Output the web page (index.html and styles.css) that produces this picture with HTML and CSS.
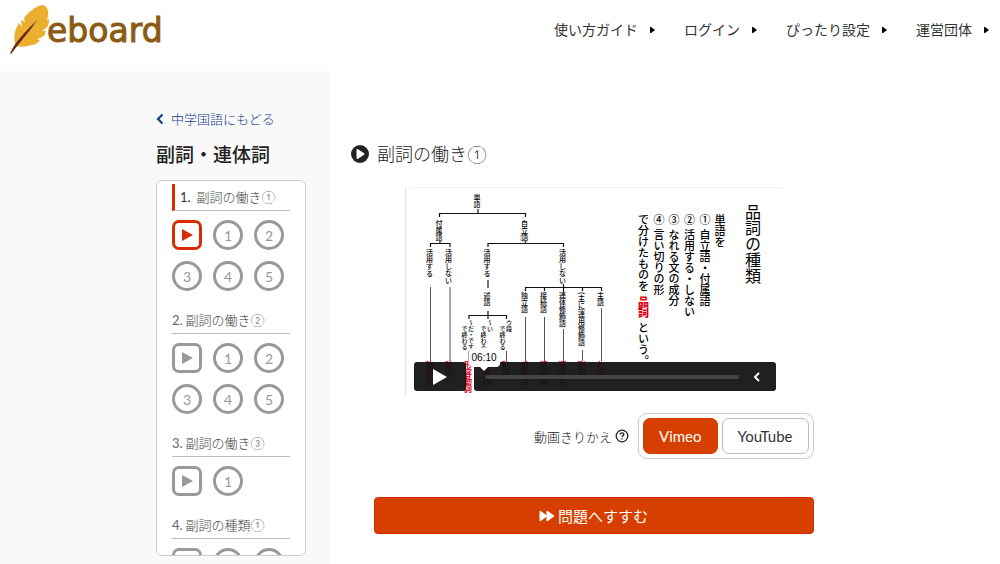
FILE: index.html
```html
<!DOCTYPE html>
<html lang="ja">
<head>
    <meta charset="UTF-8">
    <meta name="viewport" content="width=device-width, initial-scale=1.0">
    <title>副詞の働き① - eboard</title>
    <link rel="stylesheet" href="styles.css">
</head>
<body>
    <header class="header">
        <a class="logo" href="#">
            <svg class="logo-feather" viewBox="0 0 40 50" aria-hidden="true">
                <path fill="#ebae2f" d="M6 41C3 34 4 26 9 18l3 4-1-7 4 2-1-4C19 7 25 1 33 0c4 1 6 6 5 11l-1 4 2-1c0 5-1 8-4 10l-3 2h4c-1 4-3 6-6 7l-3 1 3 1c-2 3-5 5-9 5-5 2-11 2-15 1z"/>
                <path fill="#6b2a12" d="M0 48.500C5 37 15 27 27 15 20 26 11 36 1 49z"/>
            </svg>
            <span class="logo-text">eboard</span>
        </a>
        <nav class="nav">
            <a href="#">使い方ガイド<svg class="nav-arrow" viewBox="0 0 6 8"><path d="M1 1h1l4 3-4 3H1z"/></svg></a>
            <a href="#">ログイン<svg class="nav-arrow" viewBox="0 0 6 8"><path d="M1 1h1l4 3-4 3H1z"/></svg></a>
            <a href="#">ぴったり設定<svg class="nav-arrow" viewBox="0 0 6 8"><path d="M1 1h1l4 3-4 3H1z"/></svg></a>
            <a href="#">運営団体<svg class="nav-arrow" viewBox="0 0 6 8"><path d="M1 1h1l4 3-4 3H1z"/></svg></a>
        </nav>
    </header>

    <div class="container">
        <aside class="sidebar">
            <div class="sidebar-inner">
                <a class="back-link" href="#">
                    <svg class="back-icon" viewBox="0 0 8 12"><path d="M6.500 1.500L2 6l4.500 4.500" fill="none" stroke="#12408f" stroke-width="2.200"/></svg>
                    中学国語にもどる
                </a>
                <h1 class="unit-title">副詞・連体詞</h1>
                <div class="lesson-list">
                    <section class="lesson active">
                        <h2><span class="num">1.</span>副詞の働き①</h2>
                        <div class="steps">
                            <a class="step video current" href="#" aria-label="動画"><svg viewBox="0 0 12 12"><path d="M1 0l11 6-11 6z"/></svg></a>
                            <a class="step" href="#">1</a>
                            <a class="step" href="#">2</a>
                            <a class="step" href="#">3</a>
                            <a class="step" href="#">4</a>
                            <a class="step" href="#">5</a>
                        </div>
                    </section>
                    <section class="lesson">
                        <h2><span class="num">2.</span>副詞の働き②</h2>
                        <div class="steps">
                            <a class="step video" href="#" aria-label="動画"><svg viewBox="0 0 12 12"><path d="M1 0l11 6-11 6z"/></svg></a>
                            <a class="step" href="#">1</a>
                            <a class="step" href="#">2</a>
                            <a class="step" href="#">3</a>
                            <a class="step" href="#">4</a>
                            <a class="step" href="#">5</a>
                        </div>
                    </section>
                    <section class="lesson">
                        <h2><span class="num">3.</span>副詞の働き③</h2>
                        <div class="steps">
                            <a class="step video" href="#" aria-label="動画"><svg viewBox="0 0 12 12"><path d="M1 0l11 6-11 6z"/></svg></a>
                            <a class="step" href="#">1</a>
                        </div>
                    </section>
                    <section class="lesson">
                        <h2><span class="num">4.</span>副詞の種類①</h2>
                        <div class="steps">
                            <a class="step video" href="#" aria-label="動画"></a>
                            <a class="step" href="#" aria-label="1"></a>
                            <a class="step" href="#" aria-label="2"></a>
                        </div>
                    </section>
                </div>
            </div>
        </aside>

        <main class="main">
            <h2 class="video-title">
                <svg class="title-icon" viewBox="0 0 18 18"><circle cx="9" cy="9" r="9" fill="#222"/><path d="M6.500 5l6 4-6 4z" fill="#fff" stroke="#fff" stroke-width="2" stroke-linejoin="round"/></svg>
                副詞の働き①
            </h2>

            <div class="player">
                <svg class="slide" viewBox="405 187 377 207">
                    <!-- tree lines -->
                    <g class="branch">
                        <path d="M477 208v4M438.500 216v-3.500h86v3.500"/>
                        <path d="M439 240v2M429.500 246v-3.500h19.500v3.500"/>
                        <path d="M524.500 240v2M487 246v-3.500h75.500v3.500"/>
                        <path d="M487 279v8"/>
                        <path d="M562.500 283v8M524.500 290v-3.500h76v3.500M543.500 286v4M581.500 286v4"/>
                        <path d="M487 310v8M468 318v-3.500h37.500v3.500"/>
                    </g>
                    <g class="stem">
                        <path d="M429.500 286v74M449 286v74M468 350v10M505.500 350v10M524.500 316v44M543.500 316v44M562.500 328v32M581.500 349v11M600.500 307v53"/>
                    </g>
                    <circle cx="523" cy="237" r="4" fill="none" stroke="#999" stroke-width=".5"/>
                    <g class="tree-text">
                        <text x="476" y="193">単語</text>
                        <text x="438" y="219">付属語</text>
                        <text x="523.500" y="219">自立語</text>
                        <text x="428.500" y="248">活用する</text>
                        <text x="447.500" y="248">活用しない</text>
                        <text x="486" y="248">活用する</text>
                        <text x="561.500" y="248">活用しない</text>
                        <text x="486" y="291">述語</text>
                        <text x="523.500" y="291">独立語</text>
                        <text x="542.500" y="291">接続語</text>
                        <text x="561.500" y="291">連体修飾語</text>
                        <text x="580.500" y="291">(主に)連用修飾語</text>
                        <text x="599.500" y="291">主語</text>
                    </g>
                    <g class="small-text">
                        <text x="470" y="319">〜だ・です</text>
                        <text x="463.500" y="325">で終わる</text>
                        <text x="489" y="319">〜い</text>
                        <text x="482.500" y="325">で終わる</text>
                        <text x="508" y="319">ウ段</text>
                        <text x="501.500" y="325">で終わる</text>
                    </g>
                    <g class="answer-text">
                        <text x="428.500" y="360">助動詞</text>
                        <text x="448" y="360">助詞</text>
                        <text x="467" y="360">形容動詞</text>
                        <text x="486" y="360">形容詞</text>
                        <text x="504.500" y="360">動詞</text>
                        <text x="523.500" y="360">感動詞</text>
                        <text x="542.500" y="360">接続詞</text>
                        <text x="561.500" y="360">連体詞</text>
                        <text x="580.500" y="360">副詞</text>
                        <text x="599.500" y="360">名詞</text>
                    </g>
                    <!-- right side notes -->
                    <text class="slide-title" x="752" y="203">品詞の種類</text>
                    <g class="note-text">
                        <text x="719" y="213">単語を</text>
                        <text x="704" y="213">①</text>
                        <text x="704" y="228">自立語・付属語</text>
                        <text x="688.500" y="213">②</text>
                        <text x="688.500" y="228">活用する・しない</text>
                        <text x="673" y="213">③</text>
                        <text x="673" y="228">なれる文の成分</text>
                        <text x="658" y="213">④</text>
                        <text x="658" y="228">言い切りの形</text>
                        <text x="642.500" y="213">で分けたものを</text>
                        <text class="keyword" x="642.500" y="295">品詞</text>
                        <text x="642.500" y="321">という。</text>
                    </g>
                </svg>
                <div class="controls">
                    <button class="play-btn" type="button" aria-label="再生"><svg viewBox="0 0 14 16"><path d="M0 0l14 8-14 8z" fill="#fff"/></svg></button>
                    <div class="control-bar">
                        <input class="progress" type="range" min="0" max="100" value="0" aria-label="再生位置">
                        <button class="more-btn" type="button" aria-label="メニュー"><svg viewBox="0 0 8 10"><path d="M6 1L2 5l4 4" fill="none" stroke="#fff" stroke-width="2"/></svg></button>
                        <span class="time-tip">06:10</span>
                    </div>
                </div>
            </div>

            <div class="switch-row">
                <span class="switch-label" id="switchLabel">動画きりかえ</span>
                <svg class="help-icon" viewBox="0 0 14 14"><circle cx="7" cy="7" r="5.800" fill="none" stroke="#222" stroke-width="1.300"/><path d="M5.200 5.600c0-2.300 3.700-2.200 3.600 0 0 1.300-1.800 1.300-1.800 2.300M7 9.200v1.400" fill="none" stroke="#222" stroke-width="1.400"/></svg>
                <div class="switch" role="group" aria-labelledby="switchLabel">
                    <button class="switch-btn selected" type="button">Vimeo</button>
                    <button class="switch-btn" type="button">YouTube</button>
                </div>
            </div>

            <button class="next-btn" type="button">
                <svg viewBox="0 0 16 12"><path d="M1 1l7 5-7 5zM8 1l7 5-7 5z" fill="#fff" stroke="#fff" stroke-linejoin="round"/></svg>
                問題へすすむ
            </button>
        </main>
    </div>
</body>
</html>
```
FILE: styles.css
```css
* {
    box-sizing: border-box;
}
body {
    margin: 0;
    font-family: Lato, "Noto Sans CJK JP", sans-serif;
    color: #222;
    background-color: #fff;
}
a {
    text-decoration: none;
}
button {
    font-family: inherit;
    cursor: pointer;
}
h1, h2 {
    margin: 0;
}

/* header */
.header {
    display: flex;
    justify-content: space-between;
    height: 71px;
    padding: 0 11px 0 10px;
}
.logo {
    display: flex;
    padding-top: 5px;
}
.logo-feather {
    width: 40px;
    height: 50px;
    margin-right: -3px;
}
.logo-text {
    font-family: "DejaVu Sans", sans-serif;
    font-size: 33px;
    line-height: 52px;
    color: #8c5a14;
    -webkit-text-stroke: 1px #8c5a14;
}
.nav {
    display: flex;
    gap: 29px;
    height: 60px;
    align-items: center;
}
.nav a {
    display: flex;
    align-items: center;
    gap: 11px;
    font-size: 14px;
    line-height: 20px;
    color: #333;
}
.nav-arrow {
    width: 6px;
    height: 8px;
}

/* sidebar */
.container {
    display: flex;
    min-height: calc(100vh - 71px);
}
.sidebar {
    display: flex;
    justify-content: flex-end;
    width: 33%;
    min-width: 200px;
    padding: 38px 24px 8px 0;
    background-color: #f9f9f9;
}
.sidebar-inner {
    width: 150px;
}
.back-link {
    display: flex;
    align-items: center;
    gap: 7px;
    font-size: 13px;
    font-weight: 300;
    line-height: 20px;
    color: #12408f;
}
.back-icon {
    width: 8px;
    height: 12px;
}
.unit-title {
    margin: 12px 0 11px;
    font-size: 19px;
    font-weight: 500;
    line-height: 28px;
}
.lesson-list {
    height: calc(100vh - 188px);
    padding: 3px 15px;
    border: 1px solid #ccc;
    border-radius: 6px;
    background-color: #fff;
    overflow: hidden;
}
.lesson {
    margin-bottom: 15px;
}
.lesson h2 {
    border-bottom: 1px solid #bbb;
    font-size: 13px;
    font-weight: 300;
    line-height: 26px;
    color: #444;
}
.lesson .num {
    margin-right: 3px;
    font-weight: 400;
    color: #666;
}
.lesson.active h2 {
    padding-left: 5px;
    border-left: 3px solid #d92a00;
}
.lesson.active .num {
    margin-right: 6px;
    color: #333;
}
.steps {
    display: flex;
    flex-wrap: wrap;
    gap: 11px;
    padding-top: 9px;
    padding-bottom: 1px;
}
.step {
    display: flex;
    justify-content: center;
    align-items: center;
    width: 30px;
    height: 30px;
    border: 3px solid #999;
    border-radius: 50%;
    font-size: 14px;
    color: #999;
}
.step svg {
    width: 12px;
    height: 12px;
    fill: #999;
}
.step.video {
    border-radius: 7px;
}
.step.current {
    border-color: #d92a00;
}
.step.current svg {
    fill: #d92a00;
}

/* main */
.main {
    flex: 1;
    display: flex;
    flex-direction: column;
    align-items: center;
    max-width: 530px;
    padding: 68px 24px 30px 21px;
}
.video-title {
    display: flex;
    align-items: center;
    align-self: stretch;
    gap: 8px;
    font-size: 18px;
    font-weight: 300;
    line-height: 30px;
}
.title-icon {
    width: 18px;
    height: 18px;
}
.player {
    position: relative;
    width: 100%;
    max-width: 378px;
    margin-top: 18px;
    border-left: 1px solid #fbdcd2;
    border-top: 1px solid #f3f3f0;
}
.slide {
    display: block;
    width: 100%;
    font-family: "Noto Sans CJK JP", sans-serif;
}
.slide text {
    writing-mode: vertical-rl;
}
.branch {
    fill: none;
    stroke: #111;
    stroke-width: 1.2;
}
.stem {
    stroke: #555;
}
.tree-text {
    font-size: 7px;
    font-weight: 500;
}
.small-text {
    font-size: 6px;
    font-weight: 500;
}
.answer-text {
    font-size: 8px;
    font-weight: 700;
    fill: #e00010;
}
.slide-title {
    font-size: 16px;
    font-weight: 400;
}
.note-text {
    font-size: 11px;
    font-weight: 500;
}
.keyword {
    font-weight: 900;
    fill: #e00010;
}
.controls {
    position: absolute;
    left: 8px;
    right: 7px;
    bottom: 4px;
    display: flex;
    gap: 8px;
}
.play-btn {
    width: 52px;
    height: 29px;
    padding: 0;
    border: none;
    border-radius: 3px;
    background-color: rgba(20, 20, 20, 0.95);
}
.play-btn svg {
    display: block;
    width: 14px;
    height: 16px;
    margin: 0 auto;
}
.control-bar {
    position: relative;
    flex: 1;
    display: flex;
    align-items: center;
    gap: 14px;
    padding: 0 15px 0 11px;
    border-radius: 3px;
    background-color: rgba(20, 20, 20, 0.95);
}
.progress {
    appearance: none;
    flex: 1;
    min-width: 0;
    height: 4px;
    margin: 0;
    border-radius: 2px;
    background-color: #444;
}
.progress::-webkit-slider-thumb {
    appearance: none;
    width: 0;
    height: 0;
}
.more-btn {
    padding: 0;
    border: none;
    background-color: transparent;
}
.more-btn svg {
    display: block;
    width: 8px;
    height: 10px;
}
.time-tip {
    position: absolute;
    left: -5px;
    top: -14px;
    width: 31px;
    border-radius: 4px;
    font-family: "Liberation Sans", sans-serif;
    font-size: 10px;
    line-height: 19px;
    text-align: center;
    color: #000;
    background-color: #fff;
}
.time-tip::after {
    content: "";
    position: absolute;
    left: 11px;
    top: 19px;
    border: 4px solid transparent;
    border-top-color: #fff;
    border-bottom: none;
}

/* vimeo / youtube switch */
.switch-row {
    display: flex;
    justify-content: flex-end;
    align-items: center;
    width: 100%;
    max-width: 440px;
    margin-top: 18px;
}
.switch-label {
    font-size: 13px;
    font-weight: 300;
}
.help-icon {
    width: 14px;
    height: 14px;
    margin: 0 9px 0 3px;
}
.switch {
    display: flex;
    gap: 4px;
    padding: 4px;
    border: 1px solid #ccc;
    border-radius: 9px;
}
.switch-btn {
    height: 36px;
    padding: 0 15px;
    border: 1px solid #bbb;
    border-radius: 7px;
    font-size: 15px;
    color: #333;
    background-color: #fff;
}
.switch-btn.selected {
    border-color: #d63f00;
    color: #fff;
    background-color: #d63f00;
}
.next-btn {
    display: flex;
    justify-content: center;
    align-items: center;
    gap: 3px;
    width: 100%;
    max-width: 440px;
    height: 37px;
    margin-top: 38px;
    border: 1px solid #d62a00;
    border-radius: 4px;
    font-size: 15px;
    color: #fff;
    background-color: #d63f00;
}
.next-btn svg {
    width: 16px;
    height: 12px;
}
```
